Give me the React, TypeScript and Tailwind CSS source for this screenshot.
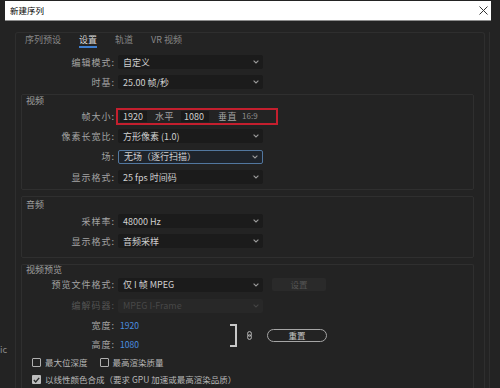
import React from "react";

function Chevron({ dim }: { dim?: boolean }) {
    return (
        <svg width="6" height="4" viewBox="0 0 6 4" className={dim ? "text-[#444444]" : "text-[#9a9a9a]"}>
            <path d="M0.6 0.6 L3 3 L5.4 0.6" fill="none" stroke="currentColor" strokeWidth="1.1" />
        </svg>
    )
}

function Select({ value, active, disabled }: { value: string; active?: boolean; disabled?: boolean }) {
    const box = active
        ? "bg-[#1e232a] border border-[#52779f]"
        : disabled
            ? "bg-[#282828]"
            : "bg-[#1b1b1b]"
    return (
        <div className={`w-[145px] h-[14px] flex items-center justify-between pl-[5px] pr-[4px] rounded-[2px] ${box}`}>
            <span className={`text-[9px] leading-none ${disabled ? "text-[#474747]" : "text-[#d0d0d0]"}`}>{value}</span>
            <Chevron dim={disabled} />
        </div>
    )
}

function Label({ text, wide, dim }: { text: string; wide?: boolean; dim?: boolean }) {
    return (
        <div className={`${wide ? "w-[99px]" : "w-[93px]"} shrink-0 text-right text-[9px] leading-none tracking-[1px] ${dim ? "text-[#555555]" : "text-[#a3a3a3]"}`}>
            {text}:
        </div>
    )
}

function CheckBox({ checked }: { checked?: boolean }) {
    return checked ? (
        <div className="w-[9px] h-[9px] rounded-[1px] bg-[#bdbdbd] flex items-center justify-center">
            <svg width="7" height="6" viewBox="0 0 7 6">
                <path d="M0.8 3 L2.7 4.9 L6.2 0.9" fill="none" stroke="#2a2a2a" strokeWidth="1.4" />
            </svg>
        </div>
    ) : (
        <div className="w-[9px] h-[9px] rounded-[1px] border border-[#b0b0b0]" />
    )
}

function Section({ title, className, headH, children }: { title: string; className: string; headH: string; children: React.ReactNode }) {
    return (
        <div className={`ml-[5px] mr-[10px] border border-[#2f2f2f] rounded-[2px] ${className}`}>
            <div className={`${headH} flex items-center pl-[4px] text-[9px] leading-none text-[#a0a0a0]`}>{title}</div>
            {children}
        </div>
    )
}

export default function App() {
    return (
        <div className="w-[500px] h-[388px] overflow-hidden bg-[#232323] font-['Noto_Sans_CJK_SC','Noto_Sans',sans-serif] select-none">
            {/* title bar */}
            <div className="flex h-[22px]">
                <div className="w-[5px]" />
                <div className="mt-[1px] w-[486px] h-[20px] bg-white border-b border-[#8d8d8d] flex items-center justify-between pl-[5px] pr-[3px]">
                    <span className="text-[8.5px] leading-none text-black">新建序列</span>
                    <svg width="9" height="9" viewBox="0 0 9 9">
                        <path d="M0.5 0.5 L8.5 8.5 M8.5 0.5 L0.5 8.5" stroke="#333" strokeWidth="1" />
                    </svg>
                </div>
            </div>

            <div className="flex mt-[10px] h-[356px]">
                <div className="w-[15px] shrink-0 pt-[313px] text-[9px] leading-none text-[#8a8a8a]">ic</div>

                <div className="w-[470px] shrink-0 border-x border-t border-[#2e2e2e] rounded-t-[3px]">
                    {/* tabs */}
                    <div className="h-[16px] flex items-start gap-[18px] pl-[9px] text-[9px] leading-[14px]">
                        <span className="text-[#888888]">序列预设</span>
                        <span className="text-[#d6d6d6] border-b-2 border-[#3f7fd0] leading-[12px] pt-[1px]">设置</span>
                        <span className="text-[#888888]">轨道</span>
                        <span className="text-[#888888]">VR 视频</span>
                    </div>

                    <div className="mt-[3px] h-[20px] flex items-center">
                        <Label text="编辑模式" wide />
                        <div className="ml-[3px]"><Select value="自定义" /></div>
                    </div>
                    <div className="h-[20px] flex items-center">
                        <Label text="时基" wide />
                        <div className="ml-[3px]"><Select value="25.00  帧/秒" /></div>
                    </div>

                    {/* video */}
                    <Section title="视频" className="mt-[2px] pb-[2px]" headH="h-[11px]">
                        <div className="h-[20px] flex items-center">
                            <Label text="帧大小" />
                            <div className="ml-[1px] w-[162px] h-[17px] border-2 border-[#c41f2e] flex items-center pl-[2px] text-[9px] leading-none">
                                <div className="w-[27px] h-[11px] bg-[#1a1a1a] flex items-center pl-[3px] text-[#d0d0d0]">1920</div>
                                <span className="ml-[8px] text-[#a3a3a3] tracking-[0.5px]">水平</span>
                                <div className="ml-[7px] w-[28px] h-[11px] bg-[#1a1a1a] flex items-center pl-[3px] text-[#d0d0d0]">1080</div>
                                <span className="ml-[9px] text-[#a3a3a3] tracking-[0.5px]">垂直</span>
                                <span className="ml-[5px] text-[#8e8e8e] text-[8px]">16:9</span>
                            </div>
                        </div>
                        <div className="h-[20px] flex items-center">
                            <Label text="像素长宽比" />
                            <div className="ml-[3px]"><Select value="方形像素 (1.0)" /></div>
                        </div>
                        <div className="h-[21px] flex items-center">
                            <Label text="场" />
                            <div className="ml-[3px]"><Select value="无场（逐行扫描）" active /></div>
                        </div>
                        <div className="h-[20px] flex items-center">
                            <Label text="显示格式" />
                            <div className="ml-[3px]"><Select value="25 fps 时间码" /></div>
                        </div>
                    </Section>

                    {/* audio */}
                    <Section title="音频" className="mt-[6px] pb-[6px]" headH="h-[14px]">
                        <div className="h-[20px] flex items-center">
                            <Label text="采样率" />
                            <div className="ml-[3px]"><Select value="48000 Hz" /></div>
                        </div>
                        <div className="h-[20px] flex items-center">
                            <Label text="显示格式" />
                            <div className="ml-[3px]"><Select value="音频采样" /></div>
                        </div>
                    </Section>

                    {/* video preview */}
                    <Section title="视频预览" className="mt-[6px] h-[130px] border-b-0" headH="h-[9px]">
                        <div className="h-[21px] flex items-center">
                            <Label text="预览文件格式" />
                            <div className="ml-[3px]"><Select value="仅 I 帧 MPEG" /></div>
                            <div className="ml-[9px] w-[54px] h-[13px] rounded-[2px] bg-[#2a2a2a] flex items-center justify-center text-[8.5px] leading-none text-[#555555]">设置</div>
                        </div>
                        <div className="h-[21px] flex items-center">
                            <Label text="编解码器" dim />
                            <div className="ml-[3px]"><Select value="MPEG I-Frame" disabled /></div>
                        </div>
                        <div className="flex items-center">
                            <div className="w-[208px]">
                                <div className="h-[19px] flex items-center">
                                    <Label text="宽度" />
                                    <span className="ml-[5px] text-[8.5px] leading-none text-[#4a8fe0]">1920</span>
                                </div>
                                <div className="h-[19px] flex items-center">
                                    <Label text="高度" />
                                    <span className="ml-[5px] text-[8.5px] leading-none text-[#4a8fe0]">1080</span>
                                </div>
                            </div>
                            <div className="w-[7px] h-[23px] border-y-2 border-r-2 border-[#c8c8c8]" />
                            <svg className="ml-[10px]" width="5" height="9" viewBox="0 0 5 9">
                                <rect x="0.6" y="0.6" width="3.8" height="4.6" rx="1.9" fill="none" stroke="#bdbdbd" strokeWidth="1" />
                                <rect x="0.6" y="3.8" width="3.8" height="4.6" rx="1.9" fill="none" stroke="#bdbdbd" strokeWidth="1" />
                            </svg>
                            <div className="ml-[15px] w-[60px] h-[13px] rounded-full border border-[#a5a5a5] flex items-center justify-center text-[8.5px] leading-none text-[#c8c8c8]">重置</div>
                        </div>
                        <div className="h-[17px] flex items-center pl-[10px] text-[8.5px] leading-none text-[#b8b8b8]">
                            <CheckBox />
                            <span className="ml-[4px]">最大位深度</span>
                            <div className="ml-[12px]"><CheckBox /></div>
                            <span className="ml-[4px]">最高渲染质量</span>
                        </div>
                        <div className="h-[17px] flex items-center pl-[10px] text-[8.5px] leading-none text-[#b8b8b8]">
                            <CheckBox checked />
                            <span className="ml-[4px]">以线性颜色合成（要求 GPU 加速或最高渲染品质）</span>
                        </div>
                    </Section>
                </div>

                <div className="w-[4px] shrink-0" />
                <div className="w-px shrink-0 bg-[#2e2e2e]" />
            </div>
        </div>
    )
}
